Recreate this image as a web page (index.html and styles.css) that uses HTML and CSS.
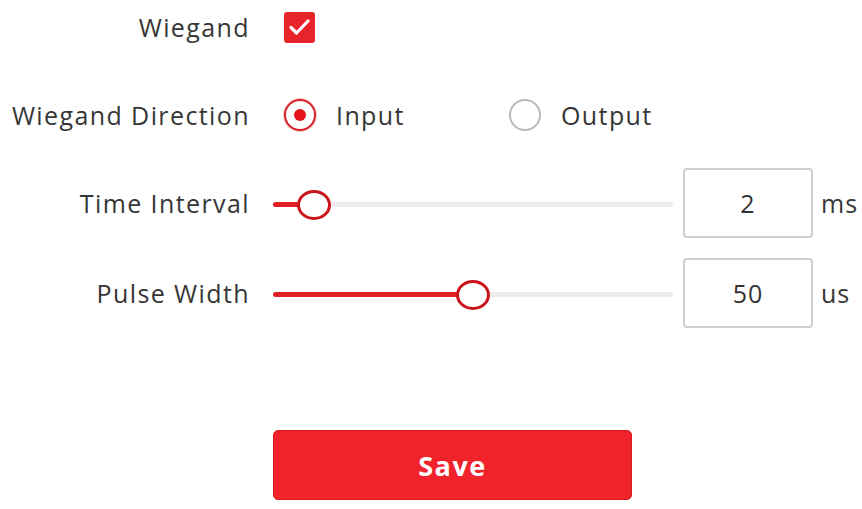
FILE: index.html
```html
<!DOCTYPE html>
<html>
    <head>
        <meta charset="utf-8">
        <title>Wiegand</title>
        <link rel="stylesheet" href="styles.css">
    </head>
    <body class="body">
        <form class="wiegand-form">
            <div class="row row-check">
                <label class="label">Wiegand</label>
                <span class="checkbox">
                    <svg width="31" height="31" viewBox="0 0 31 31">
                        <polyline points="7,15.5 12.5,21 24,9" fill="none" stroke="#fff" stroke-width="3.2" stroke-linecap="round" stroke-linejoin="round"/>
                    </svg>
                </span>
            </div>

            <div class="row row-radio">
                <label class="label">Wiegand Direction</label>
                <div class="options">
                    <span class="option">
                        <span class="radio radio-on"></span>
                        <span class="option-text">Input</span>
                    </span>
                    <span class="option">
                        <span class="radio"></span>
                        <span class="option-text">Output</span>
                    </span>
                </div>
            </div>

            <div class="row row-slider">
                <label class="label">Time Interval</label>
                <div class="slider">
                    <div class="track"></div>
                    <div class="fill" style="width:10.25%"></div>
                    <div class="knob" style="left:10.25%"></div>
                </div>
                <div class="value-box">2</div>
                <span class="unit">ms</span>
            </div>

            <div class="row row-slider row-next">
                <label class="label">Pulse Width</label>
                <div class="slider">
                    <div class="track"></div>
                    <div class="fill" style="width:50%"></div>
                    <div class="knob" style="left:50%"></div>
                </div>
                <div class="value-box">50</div>
                <span class="unit">us</span>
            </div>

            <div class="actions">
                <button type="button" class="save-btn">Save</button>
            </div>
        </form>
    </body>
</html>
```

FILE: styles.css
```css
.body{
    margin:0;
    background:#fff;
    font-family:"Open Sans","Noto Sans",sans-serif;
    color:#363636;
}

.wiegand-form{
    display:flex;
    flex-direction:column;
}

.row{
    display:flex;
    align-items:center;
}

.label{
    width:250px;
    flex:none;
    text-align:right;
    font-size:25px;
    letter-spacing:1.4px;
    margin-right:23px;
}

.row-check{
    height:54px;
}
.row-radio{
    height:54px;
    margin-top:34px;
}
.row-slider{
    height:70px;
    margin-top:26px;
}
.row-slider.row-next{
    margin-top:20px;
}

/* checkbox */
.checkbox{
    width:31px;
    height:31px;
    margin-left:11px;
    background:#e8242b;
    border-radius:3px;
    display:flex;
}

/* radio group */
.options{
    display:flex;
    margin-left:11px;
}
.option{
    width:225px;
    display:flex;
    align-items:center;
}
.radio{
    width:28px;
    height:28px;
    border:2px solid #b9b9b9;
    border-radius:50%;
    box-sizing:content-box;
    position:relative;
}
.radio-on{
    border-color:#d81e26;
    box-shadow:0 0 0 1px #f6c4c6;
}
.radio-on::after{
    content:"";
    position:absolute;
    left:8px;
    top:8px;
    width:12px;
    height:12px;
    border-radius:50%;
    background:#e3121b;
}
.option-text{
    font-size:25px;
    letter-spacing:1.4px;
    margin-left:20px;
}

/* slider */
.slider{
    width:400px;
    height:34px;
    position:relative;
    flex:none;
}
.track{
    position:absolute;
    left:0;
    right:0;
    top:16px;
    height:5px;
    border-radius:3px;
    background:#ececec;
}
.fill{
    position:absolute;
    left:0;
    top:16px;
    height:5px;
    border-radius:3px;
    background:#e11f27;
}
.knob{
    position:absolute;
    top:4px;
    width:28px;
    height:24px;
    margin-left:-17px;
    border:3px solid #c9141c;
    border-radius:50%;
    background:#fff;
}

.value-box{
    width:126px;
    height:66px;
    margin-left:10px;
    border:2px solid #cfcfcf;
    border-radius:4px;
    display:flex;
    align-items:center;
    justify-content:center;
    font-size:25px;
    letter-spacing:1px;
    color:#333;
}
.unit{
    font-size:25px;
    letter-spacing:1px;
    margin-left:8px;
}

.actions{
    margin-top:102px;
    padding-left:273px;
}
.save-btn{
    width:359px;
    height:70px;
    background:#f0232b;
    border:1px solid #d81c23;
    border-radius:5px;
    color:#fff;
    font-family:"Open Sans","Noto Sans",sans-serif;
    font-weight:bold;
    font-size:27px;
    letter-spacing:1.5px;
}
```
